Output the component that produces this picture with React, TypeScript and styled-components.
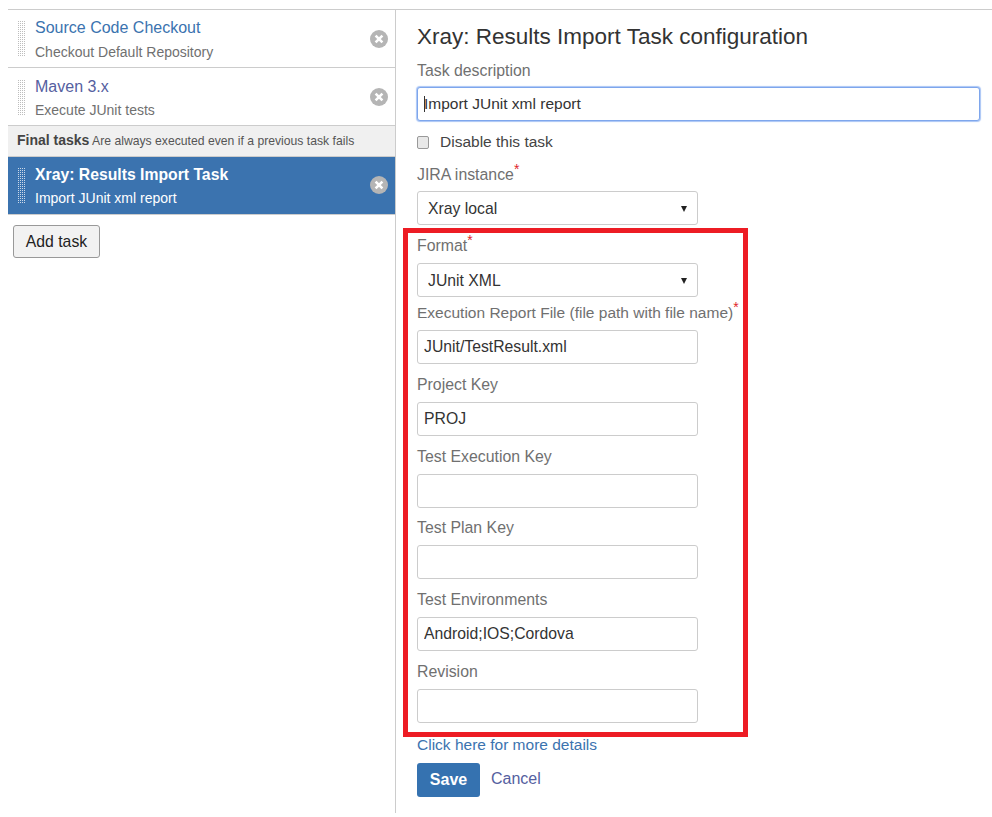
import React from "react";
import styled, { createGlobalStyle } from "styled-components";

const GlobalStyle = createGlobalStyle`
  html, body {
    margin: 0;
    padding: 0;
    background: #fff;
    font-family: "Liberation Sans", Arial, sans-serif;
  }
`;

const Page = styled.div`
  display: flex;
  margin: 9px 0 0 8px;
  border-top: 1px solid #ccc;
  height: 803px;
  overflow: hidden;
`;

const Sidebar = styled.div`
  width: 388px;
  box-sizing: border-box;
  border-right: 1px solid #ccc;
  flex-shrink: 0;
`;

const TaskRow = styled.div<{ $selected?: boolean; $top?: number }>`
  display: flex;
  align-items: flex-start;
  box-sizing: border-box;
  height: 58px;
  padding: ${(p) => p.$top ?? 9}px 7px 0 9px;
  border-bottom: 1px solid #ccc;
  background: ${(p) => (p.$selected ? "#3b73af" : "#fff")};
  color: ${(p) => (p.$selected ? "#fff" : "#707070")};
`;

const Grip = styled.div<{ $selected?: boolean }>`
  width: 8px;
  height: 36px;
  margin-top: 2px;
  flex-shrink: 0;
  background: conic-gradient(${(p) => (p.$selected ? "#ccd9e8" : "#bdbdbd")} 25%, transparent 0) 0 0 / 2px 2px;
`;

const TaskText = styled.div`
  flex: 1;
  margin-left: 10px;
`;

const TaskTitle = styled.div<{ $selected?: boolean; $visited?: boolean }>`
  font-size: ${(p) => (p.$selected ? 15.75 : 16)}px;
  line-height: 18px;
  font-weight: ${(p) => (p.$selected ? 700 : 400)};
  color: ${(p) => (p.$selected ? "#fff" : p.$visited ? "#55609f" : "#3b73af")};
`;

const TaskSub = styled.div<{ $gap?: number }>`
  font-size: 14px;
  line-height: 18px;
  margin-top: ${(p) => p.$gap ?? 6}px;
`;

const RemoveIcon = styled.svg<{ $lift?: boolean }>`
  align-self: center;
  width: 18px;
  height: 18px;
  margin-top: ${(p) => (p.$lift ? -11 : -9)}px;
  flex-shrink: 0;
`;

const FinalHeader = styled.div`
  box-sizing: border-box;
  height: 31px;
  padding: 6px 0 0 9px;
  background: #f0f0f0;
  border-bottom: 1px solid #ccc;
  font-size: 12.2px;
  line-height: 17px;
  color: #555;
  b {
    font-size: 14px;
    color: #444;
  }
`;

const AddTask = styled.button`
  display: block;
  box-sizing: border-box;
  width: 87px;
  height: 33px;
  margin: 10px 0 0 5px;
  padding: 0;
  background: #f2f2f2;
  border: 1px solid #999;
  border-radius: 3px;
  font-family: inherit;
  font-size: 15.75px;
  color: #222;
`;

const Main = styled.div`
  padding: 0 0 0 21px;
  flex: 1;
`;

const Title = styled.h2`
  margin: 13px 0 0;
  font-size: 22.5px;
  line-height: 28px;
  font-weight: 400;
  color: #333;
`;

const Label = styled.label<{ $tight?: boolean; $size?: number }>`
  display: block;
  font-size: ${(p) => p.$size ?? 15.85}px;
  line-height: 20px;
  color: #707070;
  white-space: nowrap;
  padding-top: ${(p) => (p.$tight ? 1 : 0)}px;
  margin-bottom: ${(p) => (p.$tight ? -1 : 0)}px;
`;

const Required = styled.sup`
  color: #e0252b;
  font-size: 14px;
  line-height: 0;
`;

const InputWrap = styled.div`
  position: relative;
  margin-top: 7px;
`;

const TextInput = styled.input<{ $wide?: boolean }>`
  display: block;
  box-sizing: border-box;
  width: ${(p) => (p.$wide ? "563px" : "281px")};
  height: 34px;
  padding: 0 6px;
  border: 1px solid ${(p) => (p.$wide ? "#7ea6ec" : "#ccc")};
  border-radius: 3px;
  box-shadow: ${(p) => (p.$wide ? "0 0 1px 1px #a9c5f5" : "none")};
  outline: none;
  font-family: inherit;
  font-size: ${(p) => (p.$wide ? 15.5 : 15.75)}px;
  color: #333;
  background: #fff;
`;

const Caret = styled.span`
  position: absolute;
  left: 7px;
  top: 9px;
  width: 1px;
  height: 16px;
  background: #333;
`;

const CheckRow = styled.div`
  display: flex;
  align-items: center;
  margin-top: 11px;
  height: 20px;
  font-size: 15.5px;
  color: #444;
`;

const CheckBox = styled.span`
  display: block;
  box-sizing: border-box;
  width: 12px;
  height: 13px;
  margin-right: 11px;
  border: 1px solid #999;
  border-radius: 2px;
  background: #e8e8e8;
`;

const SelectBox = styled.div`
  position: relative;
  width: 281px;
  height: 34px;
  margin-top: 7px;
`;

const Select = styled.select`
  appearance: none;
  display: block;
  box-sizing: border-box;
  width: 100%;
  height: 100%;
  padding: 0 10px;
  border: 1px solid #ccc;
  border-radius: 3px;
  background: #fff;
  font-family: inherit;
  font-size: 15.75px;
  color: #333;
`;

const SelectArrow = styled.span`
  position: absolute;
  right: 11px;
  top: 15px;
  border-left: 3.5px solid transparent;
  border-right: 3.5px solid transparent;
  border-top: 6px solid #222;
`;

const Highlight = styled.div`
  box-sizing: border-box;
  width: 345px;
  height: 509px;
  margin: 3px 0 0 -14px;
  padding: 3px 0 0 9px;
  border: 5px solid #ed1c24;
`;

const Field = styled.div<{ $gap?: number }>`
  margin-top: ${(p) => p.$gap ?? 10.75}px;
`;

const MoreLink = styled.a`
  display: block;
  margin-top: -2px;
  font-size: 15.5px;
  line-height: 20px;
  color: #3b73af;
`;

const Actions = styled.div`
  display: flex;
  align-items: center;
  margin-top: 8px;
`;

const SaveButton = styled.button`
  width: 63px;
  height: 34px;
  padding: 0;
  border: none;
  border-radius: 3px;
  background: #3572b0;
  color: #fff;
  font-family: inherit;
  font-size: 16px;
  font-weight: 700;
`;

const CancelLink = styled.a`
  margin: -2px 0 0 11px;
  font-size: 16px;
  color: #55609f;
`;

const Remove = ({ lift }: { lift?: boolean }) => (
  <RemoveIcon viewBox="0 0 18 18" $lift={lift}>
    <circle cx="9" cy="9" r="9" fill="#b5b5b5" />
    <path d="M5.6 5.6l6.8 6.8M12.4 5.6l-6.8 6.8" stroke="#fff" strokeWidth="2.6" />
  </RemoveIcon>
);

const reportFields = [
  { label: "Project Key", value: "PROJ" },
  { label: "Test Execution Key", value: "" },
  { label: "Test Plan Key", value: "" },
  { label: "Test Environments", value: "Android;IOS;Cordova" },
  { label: "Revision", value: "" },
];

export default function App() {
  return (
    <>
      <GlobalStyle />
      <Page>
        <Sidebar>
          <TaskRow>
            <Grip />
            <TaskText>
              <TaskTitle>Source Code Checkout</TaskTitle>
              <TaskSub>Checkout Default Repository</TaskSub>
            </TaskText>
            <Remove />
          </TaskRow>
          <TaskRow $top={10}>
            <Grip />
            <TaskText>
              <TaskTitle $visited>Maven 3.x</TaskTitle>
              <TaskSub $gap={5}>Execute JUnit tests</TaskSub>
            </TaskText>
            <Remove />
          </TaskRow>
          <FinalHeader>
            <b>Final tasks</b> Are always executed even if a previous task fails
          </FinalHeader>
          <TaskRow $selected>
            <Grip $selected />
            <TaskText>
              <TaskTitle $selected>Xray: Results Import Task</TaskTitle>
              <TaskSub $gap={5}>Import JUnit xml report</TaskSub>
            </TaskText>
            <Remove lift />
          </TaskRow>
          <AddTask>Add task</AddTask>
        </Sidebar>
        <Main>
          <Title>Xray: Results Import Task configuration</Title>
          <Field $gap={9}>
            <Label $tight>Task description</Label>
            <InputWrap>
              <TextInput $wide readOnly value="Import JUnit xml report" />
              <Caret />
            </InputWrap>
          </Field>
          <CheckRow>
            <CheckBox />
            Disable this task
          </CheckRow>
          <Field $gap={12}>
            <Label $tight>
              JIRA instance<Required>*</Required>
            </Label>
            <SelectBox>
              <Select defaultValue="Xray local">
                <option>Xray local</option>
              </Select>
              <SelectArrow />
            </SelectBox>
          </Field>
          <Highlight>
            <Label>
              Format<Required>*</Required>
            </Label>
            <SelectBox>
              <Select defaultValue="JUnit XML">
                <option>JUnit XML</option>
              </Select>
              <SelectArrow />
            </SelectBox>
            <Field $gap={6}>
              <Label $size={15.5}>
                Execution Report File (file path with file name)<Required>*</Required>
              </Label>
              <InputWrap>
                <TextInput readOnly value="JUnit/TestResult.xml" />
              </InputWrap>
            </Field>
            {reportFields.map((f) => (
              <Field key={f.label}>
                <Label>{f.label}</Label>
                <InputWrap>
                  <TextInput readOnly value={f.value} />
                </InputWrap>
              </Field>
            ))}
          </Highlight>
          <MoreLink>Click here for more details</MoreLink>
          <Actions>
            <SaveButton>Save</SaveButton>
            <CancelLink>Cancel</CancelLink>
          </Actions>
        </Main>
      </Page>
    </>
  );
}
